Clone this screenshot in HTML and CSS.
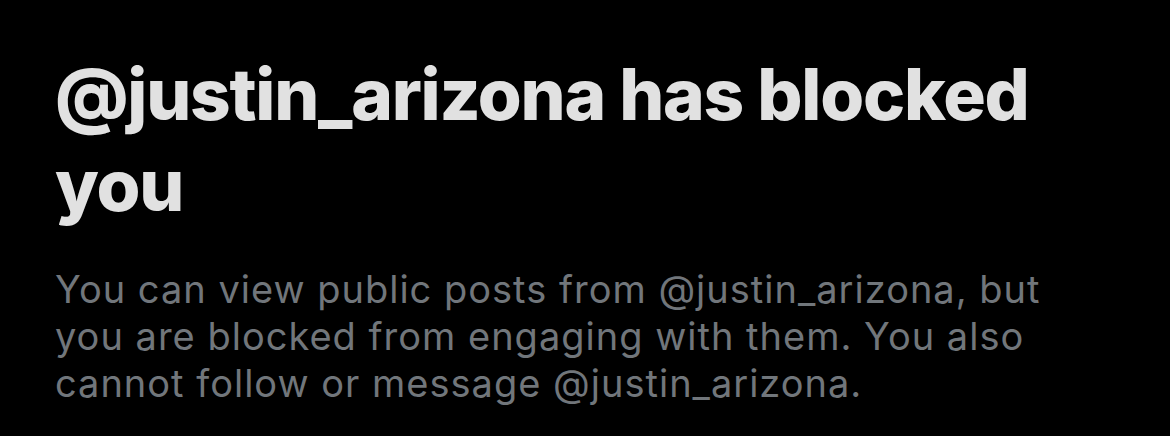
FILE: index.html
```html
<!DOCTYPE html>
<html>
<head>
<meta charset="utf-8">
<link rel="stylesheet" href="styles.css">
</head>
<body>
<main class="blocked">
  <h1 class="blocked-title">@justin_arizona has blocked you</h1>
  <p class="blocked-text">You can view public posts from @justin_arizona, but you are blocked from engaging with them. You also cannot follow or message @justin_arizona.</p>
</main>
</body>
</html>
```
FILE: styles.css
```css
html, body {
  margin: 0;
  padding: 0;
  background: #000;
}
body {
  width: 1170px;
  height: 436px;
  overflow: hidden;
  font-family: Inter, "Noto Sans", sans-serif;
}
.blocked {
  padding: 49px 0 0 55px;
  width: 1010px;
}
.blocked-title {
  margin: 0;
  font-size: 71px;
  font-weight: 800;
  line-height: 91px;
  color: #e1e1e1;
  letter-spacing: -1.25px;
}
.blocked-text {
  margin: 35px 0 0;
  font-size: 38px;
  line-height: 47px;
  font-weight: 400;
  color: #71767b;
  letter-spacing: 1px;
}
```
